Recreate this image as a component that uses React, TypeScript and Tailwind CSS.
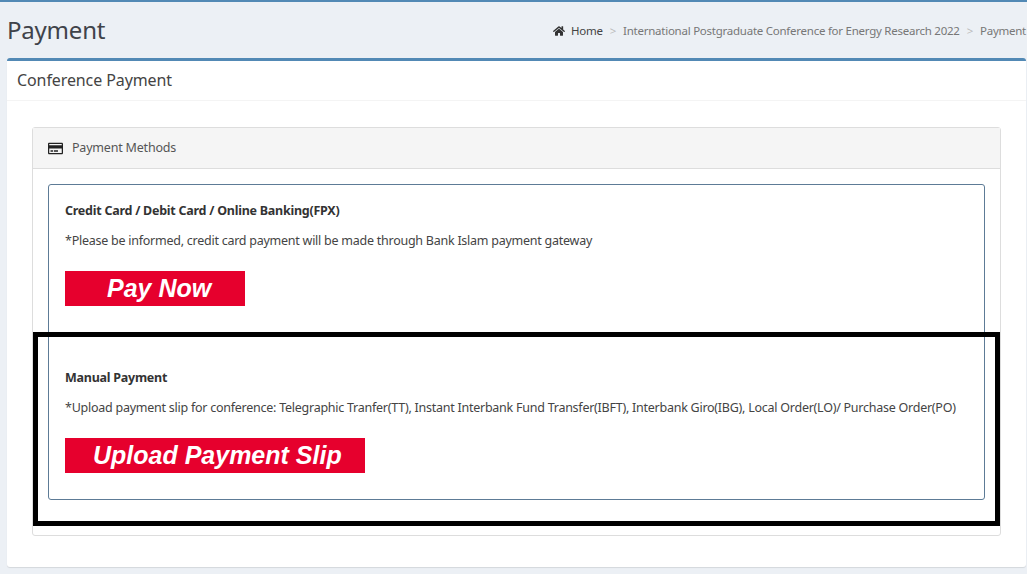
import { FaHome, FaRegCreditCard } from "react-icons/fa";

const font = { };

export default function App() {
  return (
    <div className="relative h-[574px] w-[1027px] overflow-hidden bg-[#ecf0f5] border-t-2 border-[#5289b5] font-['Noto_Sans',sans-serif] text-[#444]">
      <header className="flex h-[56px] items-center justify-between pl-[7px] pb-[1px]">
        <h1 className="text-[24px] leading-[30px] text-[#3f434a] tracking-[-0.2px]">Payment</h1>
        <nav className="flex items-center whitespace-nowrap text-[11.5px] tracking-[-0.25px] mt-[3px] pr-[1px]">
          <FaHome className="text-[#333] text-[12px] mr-[6px]" />
          <span className="text-[#444]">Home</span>
          <span className="mx-[7px] text-[#bbb]">&gt;</span>
          <span className="text-[#777]">International Postgraduate Conference for Energy Research 2022</span>
          <span className="mx-[7px] text-[#bbb]">&gt;</span>
          <span className="text-[#777]">Payment</span>
        </nav>
      </header>

      <main className="ml-[7px] mr-[1px] h-[509px] rounded-[3px] border-t-[3px] border-[#5289b5] bg-white shadow-[0_1px_1px_rgba(0,0,0,0.1)]">
        <div className="flex h-[40px] items-center border-b border-[#f4f4f4] pl-[10px] pb-[1px]">
          <h2 className="text-[16px] tracking-[-0.1px] text-[#444]">Conference Payment</h2>
        </div>

        <section className="mx-[25px] mt-[26px] h-[409px] rounded-[3px] border border-[#ddd]">
          <div className="flex h-[41px] items-center gap-[9px] border-b border-[#ddd] bg-[#f5f5f5] pl-[15px]">
            <FaRegCreditCard className="text-[15px] text-[#222]" />
            <span className="text-[12.5px] tracking-[-0.2px] text-[#555]">Payment Methods</span>
          </div>

          <div className="mx-[15px] mt-[15px] h-[316px] rounded-[3px] border border-[#5d7b96] pl-[16px] pt-[17px]">
            <h3 className="text-[12.5px] font-bold leading-[18px] tracking-[-0.25px] text-[#333]">Credit Card / Debit Card / Online Banking(FPX)</h3>
            <p className="mt-[12px] text-[12.5px] leading-[18px] tracking-[-0.25px] text-[#444]">*Please be informed, credit card payment will be made through Bank Islam payment gateway</p>
            <div className="mt-[21px] flex h-[35px] w-[180px] items-center bg-[#e6002d] pl-[42px] font-['Liberation_Sans',sans-serif] text-[25px] font-bold italic text-white">Pay Now</div>

            <h3 className="mt-[63px] text-[12.5px] font-bold leading-[18px] tracking-[-0.25px] text-[#333]">Manual Payment</h3>
            <p className="mt-[12px] whitespace-nowrap text-[12.5px] leading-[18px] tracking-[-0.25px] text-[#444]">*Upload payment slip for conference: Telegraphic Tranfer(TT), Instant Interbank Fund Transfer(IBFT), Interbank Giro(IBG), Local Order(LO)/ Purchase Order(PO)</p>
            <div className="mt-[21px] flex h-[35px] w-[300px] items-center bg-[#e6002d] pl-[28px] font-['Liberation_Sans',sans-serif] text-[25px] font-bold italic text-white">Upload Payment Slip</div>
          </div>
        </section>
      </main>

      <div className="pointer-events-none absolute left-[33px] top-[330px] h-[194px] w-[967px] border-[5px] border-black" />
    </div>
  );
}
